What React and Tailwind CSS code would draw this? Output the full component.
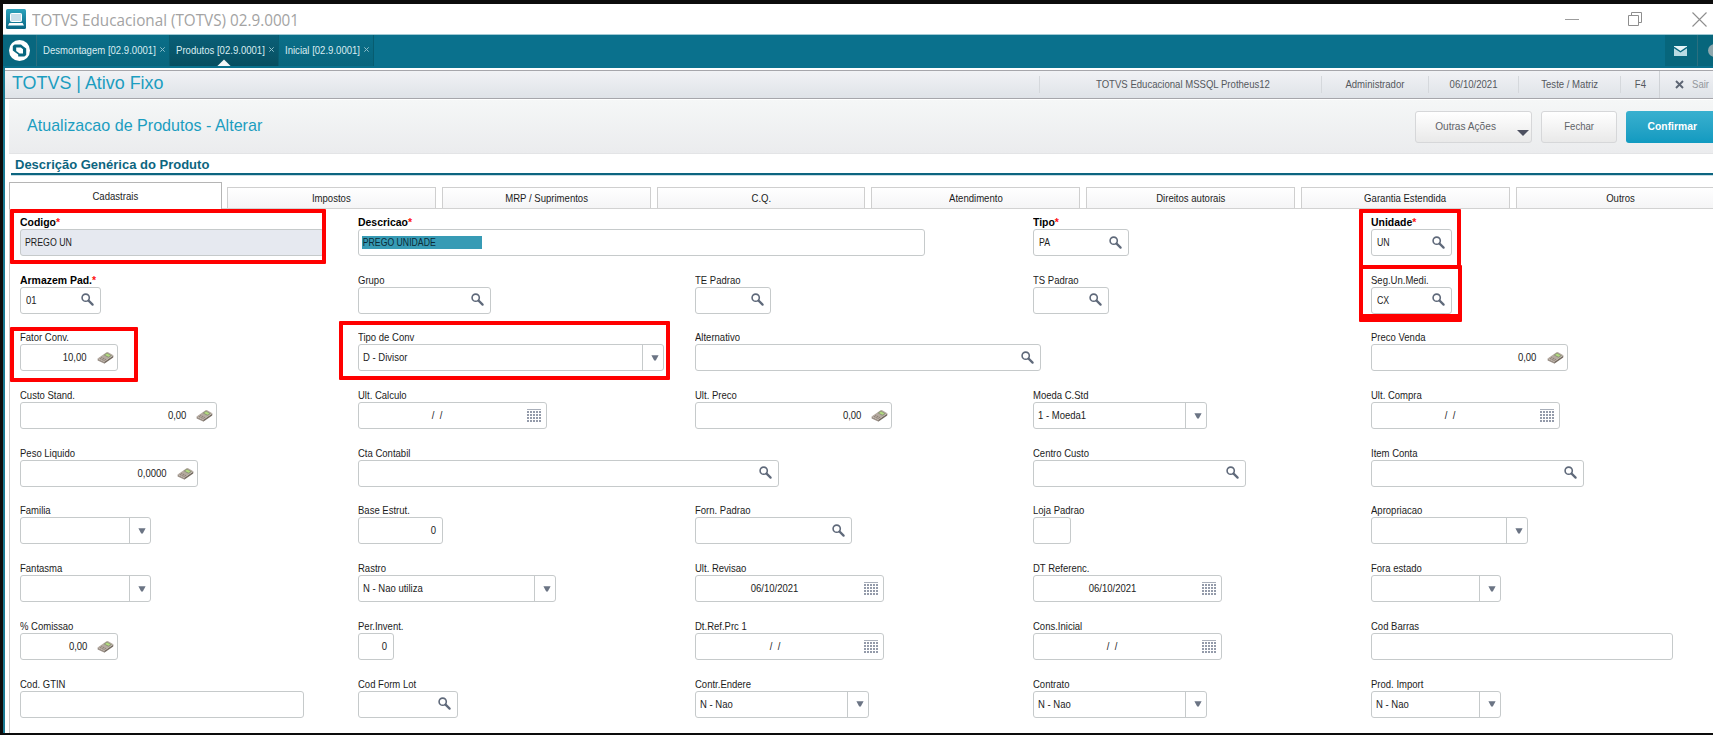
import clsx from "clsx";

const SANS = "font-['Liberation_Sans',Arial,sans-serif]";

const openTabs = [
  { title: "Desmontagem [02.9.0001]", width: "w-[133px]" },
  { title: "Produtos [02.9.0001]", width: "w-[109px]", active: true },
  { title: "Inicial [02.9.0001]", width: "w-[95px]" },
];

const statusItems = [
  { text: "TOTVS Educacional MSSQL Protheus12", width: "w-[282px] pl-[4px]" },
  { text: "Administrador", width: "w-[107px]" },
  { text: "06/10/2021", width: "w-[90px]" },
  { text: "Teste / Matriz", width: "w-[102px]" },
  { text: "F4", width: "w-[39px]" },
];

const folders = ["Impostos", "MRP / Suprimentos", "C.Q.", "Atendimento", "Direitos autorais", "Garantia Estendida", "Outros"];

// One entry per grid cell, null leaves the cell empty
const fields = [
  { label: "Codigo", required: true, value: "PREGO UN", w: "w-[304px]", readOnly: true },
  { label: "Descricao", required: true, value: "PREGO UNIDADE", w: "w-[567px]", selected: true },
  null,
  { label: "Tipo", required: true, type: "search", value: "PA", w: "w-[96px]" },
  { label: "Unidade", required: true, type: "search", value: "UN", w: "w-[81px]" },

  { label: "Armazem Pad.", required: true, type: "search", value: "01", w: "w-[81px]" },
  { label: "Grupo", type: "search", w: "w-[133px]" },
  { label: "TE Padrao", type: "search", w: "w-[76px]" },
  { label: "TS Padrao", type: "search", w: "w-[76px]" },
  { label: "Seg.Un.Medi.", type: "search", value: "CX", w: "w-[81px]" },

  { label: "Fator Conv.", type: "calc", value: "10,00", w: "w-[98px]" },
  { label: "Tipo de Conv", type: "select", value: "D - Divisor", w: "w-[306px]" },
  { label: "Alternativo", type: "search", w: "w-[346px]" },
  null,
  { label: "Preco Venda", type: "calc", value: "0,00", w: "w-[197px]" },

  { label: "Custo Stand.", type: "calc", value: "0,00", w: "w-[197px]" },
  { label: "Ult. Calculo", type: "date", value: "/  /", w: "w-[189px]" },
  { label: "Ult. Preco", type: "calc", value: "0,00", w: "w-[197px]" },
  { label: "Moeda C.Std", type: "select", value: "1 - Moeda1", w: "w-[174px]" },
  { label: "Ult. Compra", type: "date", value: "/  /", w: "w-[189px]" },

  { label: "Peso Liquido", type: "calc", value: "0,0000", w: "w-[178px]" },
  { label: "Cta Contabil", type: "search", w: "w-[421px]" },
  null,
  { label: "Centro Custo", type: "search", w: "w-[213px]" },
  { label: "Item Conta", type: "search", w: "w-[213px]" },

  { label: "Familia", type: "select", w: "w-[131px]" },
  { label: "Base Estrut.", type: "number", value: "0", w: "w-[85px]" },
  { label: "Forn. Padrao", type: "search", w: "w-[157px]" },
  { label: "Loja Padrao", w: "w-[38px]" },
  { label: "Apropriacao", type: "select", w: "w-[157px]" },

  { label: "Fantasma", type: "select", w: "w-[131px]" },
  { label: "Rastro", type: "select", value: "N - Nao utiliza", w: "w-[198px]" },
  { label: "Ult. Revisao", type: "date", value: "06/10/2021", w: "w-[189px]" },
  { label: "DT Referenc.", type: "date", value: "06/10/2021", w: "w-[189px]" },
  { label: "Fora estado", type: "select", w: "w-[130px]" },

  { label: "% Comissao", type: "calc", value: "0,00", w: "w-[98px]" },
  { label: "Per.Invent.", type: "number", value: "0", w: "w-[36px]" },
  { label: "Dt.Ref.Prc 1", type: "date", value: "/  /", w: "w-[189px]" },
  { label: "Cons.Inicial", type: "date", value: "/  /", w: "w-[189px]" },
  { label: "Cod Barras", w: "w-[302px]" },

  { label: "Cod. GTIN", w: "w-[284px]" },
  { label: "Cod Form Lot", type: "search", w: "w-[100px]" },
  { label: "Contr.Endere", type: "select", value: "N - Nao", w: "w-[174px]" },
  { label: "Contrato", type: "select", value: "N - Nao", w: "w-[174px]" },
  { label: "Prod. Import", type: "select", value: "N - Nao", w: "w-[130px]" },
];

// Red marks drawn over the form
const marks = [
  "left-[10px] top-[209px] w-[316px] h-[55px] border-4",
  "left-[10px] top-[327px] w-[128px] h-[55px] border-4",
  "left-[339px] top-[321px] w-[331px] h-[59px] border-4",
  "left-[1359px] top-[209px] w-[102px] h-[60px] border-4",
  "left-[1359px] top-[265px] w-[103px] h-[57px] border-4 border-b-8",
];

const SearchIcon = () => (
  <svg width="13" height="13" viewBox="0 0 13 13" fill="none">
    <circle cx="4.7" cy="4.7" r="3.6" stroke="#5f697a" strokeWidth="1.6" />
    <path d="M7.6 7.6L11.6 11.6" stroke="#5f697a" strokeWidth="2.2" strokeLinecap="round" />
  </svg>
);

const CalcIcon = () => (
  <svg width="17" height="13" viewBox="0 0 17 13">
    <path d="M0.6 7.6L7.2 10.8V12.6L0.6 9.4Z" fill="#9a8f86" />
    <path d="M7.2 10.8L16.4 4.6L16.2 6.6L7.2 12.8Z" fill="#73695f" />
    <path d="M0.6 7.6L9.6 1.2Q10.4 0.8 11.2 1.2L16.4 4.2L7.2 10.9Z" fill="#b5aaa0" />
    <path d="M9.8 1.8L14.8 4.4L11.4 6.7L6.6 4.1Z" fill="#8b9178" />
    <path d="M10 2.6L13.5 4.4L11.5 5.8L8 3.9Z" fill="#b2d97f" />
    <path d="M4.2 6.2L9 8.7M2.8 7.3L7.6 9.7" stroke="#7f736a" strokeWidth="0.8" strokeDasharray="1.3 0.7" />
  </svg>
);

const CalendarIcon = () => (
  <svg width="14" height="13" viewBox="0 0 14 13">
    <rect width="14" height="1" fill="#a9afba" />
    {[2, 5, 8, 11].map((y) =>
      [0, 3, 6, 9, 12].map((x) => <rect key={`${x}-${y}`} x={x} y={y} width="2" height="2" fill="#949baa" />)
    )}
  </svg>
);

const Arrow = () => (
  <svg width="8" height="6" viewBox="0 0 8 6">
    <path d="M0.4 0.3H7.6L4.8 5.5H3.2Z" fill="#6b7484" />
  </svg>
);

const Field = ({ label, required, type, value, w, readOnly, selected }) => {
  const upper = value && /^[A-Z ]+$/.test(value);
  const right = type === "calc" || type === "number";

  return (
    <div className="min-w-0">
      <div
        className={clsx(
          "h-[13px] origin-left text-[11px] leading-[13px] whitespace-nowrap",
          required ? "scale-x-[0.95] font-bold text-black" : "scale-x-[0.865] text-[#1c1c1c]"
        )}
      >
        {label}
        {required && <span className="text-[#ff1010]">*</span>}
      </div>
      <div
        className={clsx(
          "flex h-[27px] items-center rounded-[3px] border border-[#c6cacb] text-[11px] text-[#1c1c1c]",
          readOnly ? "bg-[#e6e9f0]" : "bg-white",
          w
        )}
      >
        <div
          className={clsx(
            "flex h-[13px] min-w-0 flex-1 items-center leading-[13px]",
            right && "justify-end",
            type === "number" && "pr-[6px]",
            type === "date" && "justify-center pr-[4px]",
            type === "search" && "pl-[5px]",
            type === "select" && "pl-[4px]",
            !type && (selected ? "pl-[3px]" : "pl-[4px]")
          )}
        >
          {selected ? (
            <span className="h-[13px] w-[120px] bg-[#379bb5]">
              <span className="block origin-left scale-x-[0.79] pl-px whitespace-nowrap text-[#0b2a36]">{value}</span>
            </span>
          ) : (
            <span
              className={clsx(
                "block whitespace-pre",
                right ? "origin-right" : type === "date" ? "origin-center" : "origin-left",
                upper ? "scale-x-[0.8]" : "scale-x-[0.865]"
              )}
            >
              {value}
            </span>
          )}
        </div>
        {type === "search" && (
          <span className="mr-[6px] mb-px">
            <SearchIcon />
          </span>
        )}
        {type === "calc" && (
          <span className="mr-[3px] ml-[10px]">
            <CalcIcon />
          </span>
        )}
        {type === "date" && (
          <span className="mr-[5px] ml-[7px]">
            <CalendarIcon />
          </span>
        )}
        {type === "select" && (
          <span className="flex h-full w-[21px] items-center justify-center border-l border-[#c6cacb] pl-[4px]">
            <Arrow />
          </span>
        )}
      </div>
    </div>
  );
};

const TitleBar = () => (
  <div className="flex h-[30px] shrink-0 items-center bg-white pr-[6px] pl-[3px]">
    <svg width="20" height="20" viewBox="0 0 20 20">
      <defs>
        <linearGradient id="appIcon" x1="0" y1="0" x2="0" y2="1">
          <stop offset="0" stopColor="#2ba3bd" />
          <stop offset="1" stopColor="#0a6784" />
        </linearGradient>
      </defs>
      <rect width="20" height="20" rx="1.5" fill="url(#appIcon)" />
      <rect x="4.5" y="4.5" width="11" height="8" rx="0.8" fill="#c9dfea" stroke="#fff" />
      <path d="M3.4 14H16.6L18 16.6H2Z" fill="#fff" />
    </svg>
    <span className="ml-[6px] flex-1 origin-left scale-x-[0.924] pt-[2px] font-['Open_Sans','Noto_Sans',sans-serif] text-[16.5px] whitespace-nowrap text-[#a3a3a3]">
      TOTVS Educacional (TOTVS) 02.9.0001
    </span>
    <div className="flex items-center gap-[49px]">
      <svg width="14" height="14" viewBox="0 0 14 14">
        <path d="M0 7.5H14" stroke="#9c9c9c" />
      </svg>
      <svg width="15" height="15" viewBox="0 0 15 15" fill="none" stroke="#8e8e8e">
        <path d="M0.5 3.5H10.5V13.5H0.5ZM3.5 3.5V0.5H13.5V10.5H10.5" />
      </svg>
      <svg width="15" height="15" viewBox="0 0 15 15">
        <path d="M0.5 0.5L14.5 14.5M14.5 0.5L0.5 14.5" stroke="#8e8e8e" strokeWidth="1.1" />
      </svg>
    </div>
  </div>
);

const TabBar = () => (
  <div className="flex h-[34px] shrink-0 border-t border-[#9fc9d4] bg-[#0a718d] pb-[2px] text-[11px] text-[#d9edf2]">
    <div className="flex w-[34px] items-center justify-center border-r border-[#2b6f7f] bg-[#08677f]">
      <svg width="21" height="21" viewBox="0 0 21 21" fill="none">
        <circle cx="10.5" cy="10.5" r="10.5" fill="#fff" />
        <path d="M5.6 4.4H12L14.4 6.4L17.2 8.6V15L15.4 16.6H9.2V14.4L6.4 12.4L3.8 10.4V6Z" fill="#08677f" />
        <path d="M7.2 7.4H11.8L14 9.2V13.6H10.6L7.2 11Z" fill="#fff" />
      </svg>
    </div>
    {openTabs.map((tab) => (
      <div
        key={tab.title}
        className={clsx(
          "relative flex items-center border-r border-[#075c70] pr-[4px] pl-[6px]",
          tab.active ? "bg-linear-to-b from-[#0a6078] to-[#074e60]" : "bg-linear-to-b from-[#0a6f89] to-[#08657d]",
          tab.width
        )}
      >
        <span className="min-w-0 flex-1 origin-left scale-x-[0.87] whitespace-nowrap">{tab.title}</span>
        <svg width="5" height="5" viewBox="0 0 5 5" className="mb-[2px] shrink-0">
          <path d="M0.3 0.3L4.7 4.7M4.7 0.3L0.3 4.7" stroke="#8fc0cc" />
        </svg>
        {tab.active && (
          <svg width="14" height="7" viewBox="0 0 14 7" className="absolute bottom-0 left-[47px]">
            <path d="M7 0.4L13.6 7H0.4Z" fill="#f2f7f8" />
          </svg>
        )}
      </div>
    ))}
    <div className="flex-1" />
    <div className="flex w-[33px] items-center justify-center border-r border-[#2b6f7f] bg-[#07667c] pr-[2px]">
      <svg width="13" height="10" viewBox="0 0 13 10">
        <rect width="13" height="10" fill="#b9dbe3" />
        <path d="M0 0H13V1.2L6.5 5.6L0 1.2Z" fill="#e6f4f7" />
        <path d="M0 1.4L6.5 5.8L13 1.4" fill="none" stroke="#07667c" strokeWidth="1.3" />
      </svg>
    </div>
    <div className="flex w-[15px] items-center overflow-hidden bg-[#07667c] pl-[10px]">
      <span className="h-[13px] w-[13px] shrink-0 rounded-full bg-[#8fa8ae]" />
    </div>
  </div>
);

const StatusBar = () => (
  <div className="flex h-[29px] shrink-0 items-center border-y border-[#a6a6ab] bg-linear-to-b from-[#f1f2f5] to-[#dfe3e8] text-[11px] text-[#55585d]">
    <h1 className="flex-1 pb-[2px] pl-[7px] text-[17.9px] leading-none whitespace-nowrap text-[#1b9dc0]">TOTVS | Ativo Fixo</h1>
    {statusItems.map((item) => (
      <div key={item.text} className={clsx("flex h-[17px] items-center justify-center border-l border-[#d5d8dc]", item.width)}>
        <span className="scale-x-[0.87] whitespace-nowrap">{item.text}</span>
      </div>
    ))}
    <div className="flex h-full w-[54px] items-center border-l border-[#cfd2d6] pl-[15px]">
      <svg width="9" height="9" viewBox="0 0 9 9">
        <path d="M1 1L8 8M8 1L1 8" stroke="#5d6573" strokeWidth="1.9" />
      </svg>
      <span className="ml-[8px] origin-left scale-x-[0.87] text-[#93979c]">Sair</span>
    </div>
  </div>
);

const ActionBar = () => (
  <div className="ml-[4px] flex h-[54px] shrink-0 items-center border-b border-[#e3e4e6] bg-linear-to-b from-[#f5f7f7] to-[#ebecee] pl-[18px] text-[11px] text-[#5f6368]">
    <h2 className="flex-1 pb-[3px] text-[16.1px] leading-none whitespace-nowrap text-[#1b9dc0]">Atualizacao de Produtos - Alterar</h2>
    <button className="mr-[9px] flex h-[32px] w-[117px] items-center rounded-[3px] border border-[#d6d7d9] bg-linear-to-b from-white to-[#e9e9e9]">
      <span className="w-[101px] scale-x-[0.92] pr-[2px] whitespace-nowrap">Outras Ações</span>
      <svg width="12" height="6" viewBox="0 0 12 6" className="mt-[13px]">
        <path d="M0 0H12L6 6Z" fill="#4d5060" />
      </svg>
    </button>
    <button className="mr-[9px] h-[32px] w-[76px] rounded-[3px] border border-[#d6d7d9] bg-linear-to-b from-white to-[#e9e9e9]">
      <span className="inline-block scale-x-[0.87]">Fechar</span>
    </button>
    <button className="h-[32px] w-[87px] rounded-l-[3px] bg-linear-to-b from-[#38b0cf] to-[#109ac0] pl-[5px] font-bold text-white">
      <span className="inline-block scale-x-[0.94]">Confirmar</span>
    </button>
  </div>
);

const Folders = () => (
  <div className="ml-[4px] flex shrink-0 items-end overflow-hidden text-[11px] text-[#1c1c1c]">
    <div className="flex h-[27px] w-[213px] shrink-0 items-center justify-center border border-b-0 border-[#b5b5b5] bg-white">
      <span className="scale-x-[0.87]">Cadastrais</span>
    </div>
    <div className="flex min-w-0 flex-1 gap-[6px] overflow-hidden border-b border-[#d2d2d2] pl-[5px]">
      {folders.map((name) => (
        <div
          key={name}
          className="flex h-[21px] w-[208.8px] shrink-0 items-center justify-center border border-b-0 border-[#cfcfcf] bg-linear-to-b from-white to-[#f5f5f6]"
        >
          <span className="scale-x-[0.87] whitespace-nowrap">{name}</span>
        </div>
      ))}
    </div>
  </div>
);

const App = () => {
  return (
    <div className={clsx("relative h-[735px] w-[1713px] overflow-hidden bg-[#0c0c0c] pt-[4px] pl-[3px]", SANS)}>
      <div className="flex h-[729px] flex-col bg-white">
        <TitleBar />
        <TabBar />
        <div className="flex min-h-0 flex-1 flex-col border-l-2 border-[#1a7a93] bg-white pt-[2px]">
          <StatusBar />
          <div className="h-px shrink-0" />
          <ActionBar />
          <h3 className="flex h-[19px] shrink-0 items-center pt-[2px] pl-[10px] text-[13px] leading-none font-bold text-[#0c6580]">
            Descrição Genérica do Produto
          </h3>
          <div className="mb-[6px] ml-[6px] h-[3px] shrink-0 border-t-2 border-b border-t-[#0c6580] border-b-[#c5dbe3]" />
          <Folders />
          <div className="ml-[4px] min-h-0 flex-1 overflow-hidden border-l border-[#c9c9c9] pt-[7px] pl-[10px]">
            <div className="grid auto-rows-[57.7px] grid-cols-[repeat(5,337.7px)]">
              {fields.map((field, index) => (field ? <Field key={index} {...field} /> : <div key={index} />))}
            </div>
          </div>
        </div>
      </div>

      {marks.map((mark) => (
        <div key={mark} className={clsx("absolute rounded-[1px] border-[#ff0000]", mark)} />
      ))}
    </div>
  );
};

export default App;
